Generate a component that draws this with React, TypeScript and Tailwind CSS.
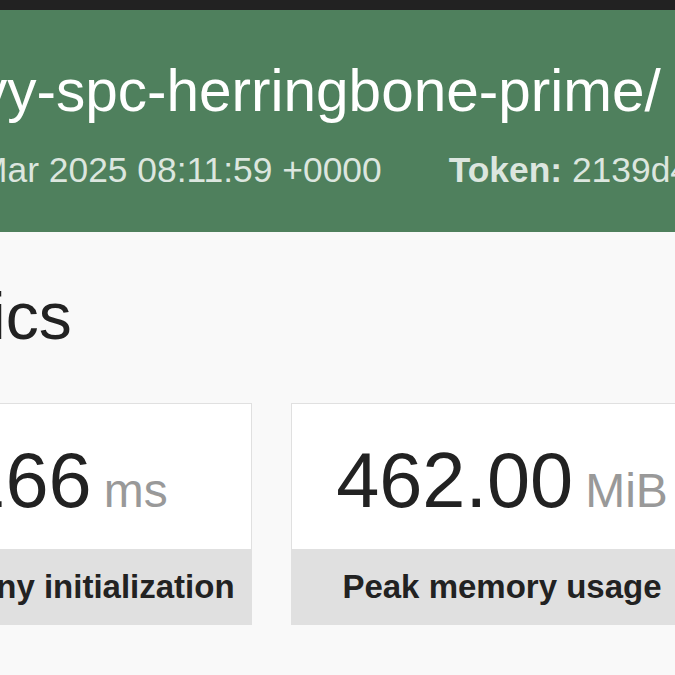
import React from 'react';

const Metric = ({
  value,
  unit,
  label,
  width,
}: {
  value: string;
  unit: string;
  label: string;
  width: string;
}) => (
  <div className={`shrink-0 border border-[#e0e0e0] bg-white ${width}`}>
    <div className="h-[145px] pt-[38px] text-center whitespace-nowrap">
      <span className="text-[77.5px] leading-[77px] text-[#222]">{value}</span>
      <span className="ml-[12px] text-[48px] leading-[77px] text-[#999]">{unit}</span>
    </div>
    <div className="flex h-[75px] items-center justify-center bg-[#e0e0e0] text-[33px] font-bold text-[#222] whitespace-nowrap">
      {label}
    </div>
  </div>
);

export default function App() {
  return (
    <div className="h-[675px] w-[675px] overflow-hidden bg-[#f9f9f9] font-['Liberation_Sans',Arial,sans-serif]">
      {/* top bar */}
      <div className="h-[10px] bg-[#222]" />

      {/* status header */}
      <div className="h-[222px] bg-[#4f805d] pt-[37px]">
        <h1 className="-ml-[22px] whitespace-nowrap text-[58.5px] font-normal leading-normal text-white">
          vy-spc-herringbone-prime/
        </h1>
        <div className="-ml-[22px] mt-[9px] flex gap-[67px] whitespace-nowrap text-[35.4px] leading-normal text-[#dce6df]">
          <span>Mar 2025 08:11:59 +0000</span>
          <span>
            <b>Token:</b> 2139d4
          </span>
        </div>
      </div>

      {/* metrics */}
      <h2 className="-ml-[141px] mt-[35px] whitespace-nowrap text-[66px] font-normal leading-normal text-[#222]">
        Metrics
      </h2>
      <div className="-ml-[122px] mt-[37px] flex gap-[39px]">
        <Metric value="166" unit="ms" label="Symfony initialization" width="w-[374px]" />
        <Metric value="462.00" unit="MiB" label="Peak memory usage" width="w-[422px]" />
      </div>
    </div>
  );
}
